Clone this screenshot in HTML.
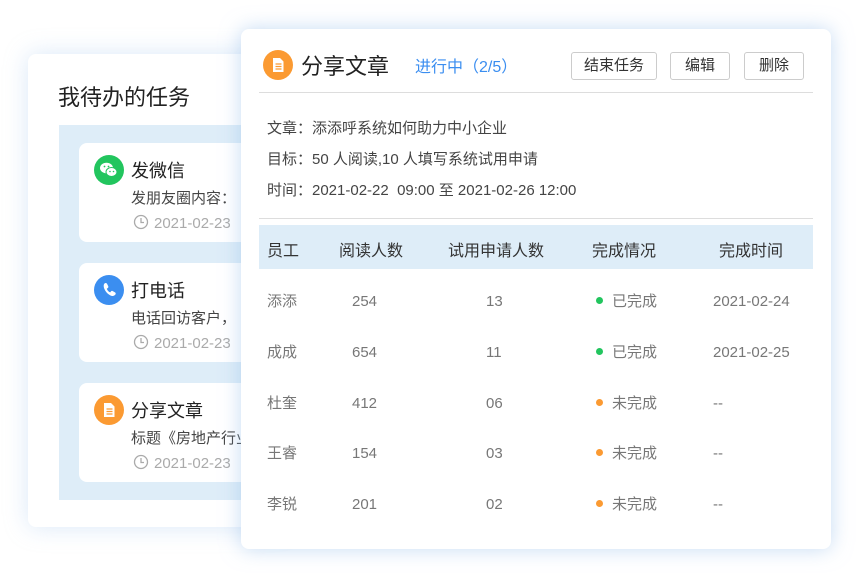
<!DOCTYPE html>
<html><head><meta charset="utf-8"><style>
*{margin:0;padding:0;box-sizing:border-box}
body{width:866px;height:573px;background:#fff;position:relative;overflow:hidden;font-family:"Liberation Sans","Noto Sans CJK SC",sans-serif;color:#333}
.abs{position:absolute;white-space:nowrap}
.left{position:absolute;left:28px;top:54px;width:260px;height:473px;background:#fff;border-radius:8px;box-shadow:0 0 24px rgba(150,190,235,.35)}
.blue{position:absolute;left:59px;top:125px;width:200px;height:375px;background:#deedf8}
.card{position:absolute;left:79px;width:180px;height:99px;background:#fff;border-radius:8px}
.ic{position:absolute;width:30px;height:30px;border-radius:50%;left:15px;top:12px}
.t{position:absolute;left:52px;top:14px;font-size:18px;color:#222}
.d{position:absolute;left:52px;top:44px;font-size:15px;color:#444;white-space:nowrap}
.tm{position:absolute;left:54px;top:71px;font-size:15px;color:#aaa;white-space:nowrap}
.tm svg{vertical-align:-2px;margin-right:5px}
.right{position:absolute;left:241px;top:29px;width:590px;height:520px;background:#fff;border-radius:8px;box-shadow:0 0 20px rgba(150,190,235,.55)}
.btn{position:absolute;top:52px;height:28px;border:1px solid #ccc;border-radius:3px;font-size:15px;color:#333;text-align:center;line-height:26px}
.row{font-size:15px;color:#777}
.n{font-size:15px;color:#777;margin-top:3px}
.dot{display:inline-block;width:7px;height:7px;border-radius:50%;margin-right:9px;vertical-align:2px}
</style></head><body>
<div class="left"></div>
<div class="abs" style="left:58px;top:80px;font-size:22px;color:#222">我待办的任务</div>
<div class="blue"></div>
<div class="card" style="top:143px">
 <div class="ic" style="background:#22c55e"><svg width="30" height="30" viewBox="0 0 30 30"><ellipse cx="12.5" cy="13" rx="6.5" ry="5.3" fill="#fff"/><ellipse cx="17.5" cy="17" rx="5.5" ry="4.5" fill="#fff" stroke="#22c55e" stroke-width="1"/><circle cx="10.5" cy="11.5" r="0.9" fill="#22c55e"/><circle cx="14.5" cy="11.5" r="0.9" fill="#22c55e"/><circle cx="16" cy="16.5" r="0.8" fill="#22c55e"/><circle cx="19.5" cy="16.5" r="0.8" fill="#22c55e"/></svg></div>
 <div class="t">发微信</div><div class="d">发朋友圈内容：</div>
 <div class="tm"><svg width="16" height="16" viewBox="0 0 16 16"><circle cx="8" cy="8" r="6.5" fill="none" stroke="#aaa" stroke-width="1.3"/><path d="M8 4v4.5h3" fill="none" stroke="#aaa" stroke-width="1.3"/></svg>2021-02-23</div>
</div>
<div class="card" style="top:263px">
 <div class="ic" style="background:#3b8ef0"><svg width="30" height="30" viewBox="0 0 30 30"><path d="M10.5 8.5c1-.8 2-.6 2.5.3l1.2 2.3c.4.8.1 1.5-.6 2l-.8.6c.6 1.7 1.8 3 3.4 3.7l.6-.8c.5-.7 1.3-.9 2-.5l2.2 1.3c.9.5 1 1.5.2 2.4-1.4 1.6-3.3 1.6-5.5.2-2.6-1.6-4.6-4-5.6-6.8-.6-1.9-.6-3.6.4-4.7z" fill="#fff"/></svg></div>
 <div class="t">打电话</div><div class="d">电话回访客户，</div>
 <div class="tm"><svg width="16" height="16" viewBox="0 0 16 16"><circle cx="8" cy="8" r="6.5" fill="none" stroke="#aaa" stroke-width="1.3"/><path d="M8 4v4.5h3" fill="none" stroke="#aaa" stroke-width="1.3"/></svg>2021-02-23</div>
</div>
<div class="card" style="top:383px">
 <div class="ic" style="background:#fb9a32"><svg width="30" height="30" viewBox="0 0 30 30"><path d="M10 8h7l3.5 3.5V22h-10.5z" fill="#fff"/><path d="M12.5 14h6M12.5 16.5h6M12.5 19h6" stroke="#fb9a32" stroke-width="1.3"/></svg></div>
 <div class="t">分享文章</div><div class="d">标题《房地产行业</div>
 <div class="tm"><svg width="16" height="16" viewBox="0 0 16 16"><circle cx="8" cy="8" r="6.5" fill="none" stroke="#aaa" stroke-width="1.3"/><path d="M8 4v4.5h3" fill="none" stroke="#aaa" stroke-width="1.3"/></svg>2021-02-23</div>
</div>

<div class="right"></div>
<div class="abs" style="left:263px;top:50px;width:30px;height:30px;border-radius:50%;background:#fb9a32"><svg width="30" height="30" viewBox="0 0 30 30"><path d="M10 8h7l3.5 3.5V22h-10.5z" fill="#fff"/><path d="M12.5 14h6M12.5 16.5h6M12.5 19h6" stroke="#fb9a32" stroke-width="1.3"/></svg></div>
<div class="abs" style="left:301px;top:49px;font-size:22px;color:#222">分享文章</div>
<div class="abs" style="left:415px;top:53px;font-size:16px;color:#3b8ef0">进行中（2/5）</div>
<div class="btn" style="left:571px;width:86px">结束任务</div>
<div class="btn" style="left:670px;width:60px">编辑</div>
<div class="btn" style="left:744px;width:60px">删除</div>
<div class="abs" style="left:259px;top:92px;width:554px;height:1px;background:#ddd"></div>
<div class="abs" style="left:267px;top:117px;font-size:15px;color:#444">文章：添添呼系统如何助力中小企业</div>
<div class="abs" style="left:267px;top:148px;font-size:15px;color:#444">目标：50 人阅读,10 人填写系统试用申请</div>
<div class="abs" style="left:267px;top:179px;font-size:15px;color:#444">时间：2021-02-22&nbsp; 09:00 至 2021-02-26 12:00</div>
<div class="abs" style="left:259px;top:218px;width:554px;height:1px;background:#ddd"></div>
<div class="abs" style="left:259px;top:225px;width:554px;height:44px;background:#deedf8"></div>
<div class="abs" style="left:267px;top:237px;font-size:16px;color:#333">员工</div>
<div class="abs" style="left:339px;top:237px;font-size:16px;color:#333">阅读人数</div>
<div class="abs" style="left:448px;top:237px;font-size:16px;color:#333">试用申请人数</div>
<div class="abs" style="left:592px;top:237px;font-size:16px;color:#333">完成情况</div>
<div class="abs" style="left:719px;top:237px;font-size:16px;color:#333">完成时间</div>

<div class="abs row" style="left:267px;top:290px">添添</div><div class="abs n" style="left:352px;top:290px">254</div><div class="abs n" style="left:486px;top:290px">13</div><div class="abs row" style="left:596px;top:290px"><span class="dot" style="background:#22c55e"></span>已完成</div><div class="abs n" style="left:713px;top:290px">2021-02-24</div>
<div class="abs row" style="left:267px;top:341px">成成</div><div class="abs n" style="left:352px;top:341px">654</div><div class="abs n" style="left:486px;top:341px">11</div><div class="abs row" style="left:596px;top:341px"><span class="dot" style="background:#22c55e"></span>已完成</div><div class="abs n" style="left:713px;top:341px">2021-02-25</div>
<div class="abs row" style="left:267px;top:392px">杜奎</div><div class="abs n" style="left:352px;top:392px">412</div><div class="abs n" style="left:486px;top:392px">06</div><div class="abs row" style="left:596px;top:392px"><span class="dot" style="background:#fb9a32"></span>未完成</div><div class="abs n" style="left:713px;top:392px">--</div>
<div class="abs row" style="left:267px;top:442px">王睿</div><div class="abs n" style="left:352px;top:442px">154</div><div class="abs n" style="left:486px;top:442px">03</div><div class="abs row" style="left:596px;top:442px"><span class="dot" style="background:#fb9a32"></span>未完成</div><div class="abs n" style="left:713px;top:442px">--</div>
<div class="abs row" style="left:267px;top:493px">李锐</div><div class="abs n" style="left:352px;top:493px">201</div><div class="abs n" style="left:486px;top:493px">02</div><div class="abs row" style="left:596px;top:493px"><span class="dot" style="background:#fb9a32"></span>未完成</div><div class="abs n" style="left:713px;top:493px">--</div>
</body></html>
